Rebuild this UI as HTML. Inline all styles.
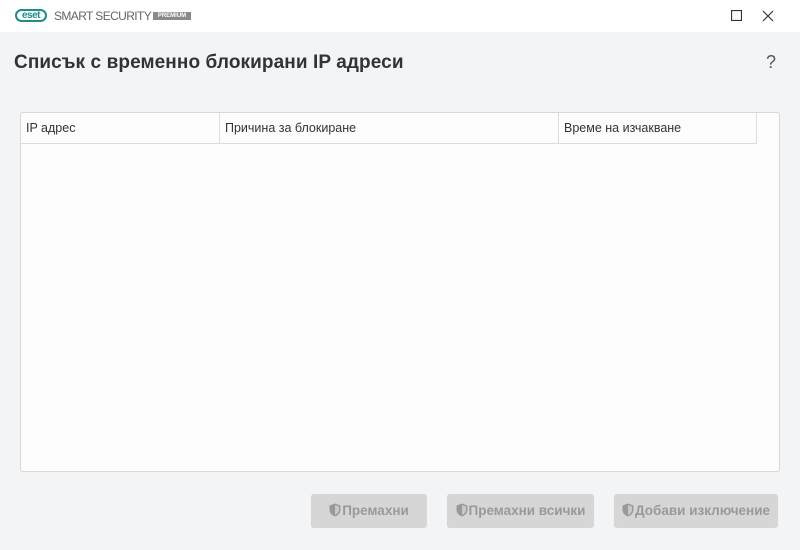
<!DOCTYPE html>
<html><head><meta charset="utf-8"><style>
*{margin:0;padding:0;box-sizing:border-box}
body{width:800px;height:550px;background:#f3f4f6;font-family:"Liberation Sans","DejaVu Sans",sans-serif;position:relative;overflow:hidden}
.tb{position:absolute;left:0;top:0;width:800px;height:32px;background:#fff}
.logo{position:absolute;left:15px;top:9px;width:32px;height:13px;border:2px solid #1d8c8c;border-radius:7px;color:#1d8c8c;font:bold 10px/9px "Liberation Sans",sans-serif;text-align:center;letter-spacing:-0.5px}
.brand{position:absolute;left:54px;top:9px;font-size:12px;color:#666;letter-spacing:-0.6px}
.prem{position:absolute;left:153px;top:12px;width:38px;height:8px;background:#8a8a8a;color:#fff;font:bold 6px/8px sans-serif;text-align:center}
h1{position:absolute;left:14px;top:52px;font-size:19px;font-weight:bold;color:#333;letter-spacing:0.1px}
.q{position:absolute;left:766px;top:52px;font-size:18px;color:#556}
.panel{position:absolute;left:20px;top:112px;width:760px;height:360px;background:#fdfdfd;border:1px solid #d8d8d8;border-radius:3px}
.hdr{position:absolute;left:0;top:0;width:736px;height:31px;border-bottom:1px solid #ddd;font-size:12.5px;color:#333}
.hdr div{position:absolute;top:0;height:30px;line-height:31px;padding-left:5px;border-right:1px solid #ddd}
.btn{position:absolute;top:494px;height:34px;background:#d6d6d6;border-radius:3px;color:#999;font-size:13.5px;font-weight:bold;line-height:34px;text-align:center}
.btn svg{vertical-align:-2px;margin-right:1px}
</style></head><body>
<div class="tb">
<div class="logo">eset</div>
<div class="brand">SMART SECURITY</div>
<div class="prem">PREMIUM</div>
<svg style="position:absolute;left:731px;top:10px" width="11" height="11"><rect x="0.5" y="0.5" width="10" height="10" fill="none" stroke="#333" stroke-width="1.2"/></svg>
<svg style="position:absolute;left:762px;top:10px" width="12" height="12"><path d="M1 1L11 11M11 1L1 11" stroke="#333" stroke-width="1.2"/></svg>
</div>
<h1>Списък с временно блокирани IP адреси</h1>
<div class="q">?</div>
<div class="panel"><div class="hdr">
<div style="left:0;width:199px">IP адрес</div>
<div style="left:199px;width:339px">Причина за блокиране</div>
<div style="left:538px;width:198px">Време на изчакване</div>
</div></div>
<div class="btn" style="left:311px;width:116px"><svg width="12" height="14" viewBox="0 0 12 14"><path d="M6 0.5L11.5 2.5V7C11.5 10 9 12.5 6 13.5C3 12.5 0.5 10 0.5 7V2.5Z" fill="#999"/><path d="M6 2V12C8 11 10 9 10 7V3.5Z" fill="#c8c8c8"/></svg>Премахни</div>
<div class="btn" style="left:447px;width:147px"><svg width="12" height="14" viewBox="0 0 12 14"><path d="M6 0.5L11.5 2.5V7C11.5 10 9 12.5 6 13.5C3 12.5 0.5 10 0.5 7V2.5Z" fill="#999"/><path d="M6 2V12C8 11 10 9 10 7V3.5Z" fill="#c8c8c8"/></svg>Премахни всички</div>
<div class="btn" style="left:614px;width:164px"><svg width="12" height="14" viewBox="0 0 12 14"><path d="M6 0.5L11.5 2.5V7C11.5 10 9 12.5 6 13.5C3 12.5 0.5 10 0.5 7V2.5Z" fill="#999"/><path d="M6 2V12C8 11 10 9 10 7V3.5Z" fill="#c8c8c8"/></svg>Добави изключение</div>
</body></html>
